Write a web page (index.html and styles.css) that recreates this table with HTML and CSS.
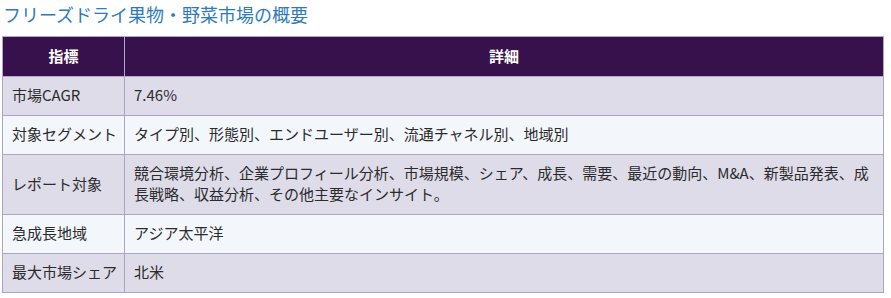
FILE: index.html
```html
<!DOCTYPE html>
<html lang="ja">
<head>
<meta charset="utf-8">
<title>フリーズドライ果物・野菜市場の概要</title>
<link rel="stylesheet" href="styles.css">
</head>
<body>
<div class="wrap">
  <h2 class="title">フリーズドライ果物・野菜市場の概要</h2>
  <table class="summary">
    <colgroup><col class="c-key"><col></colgroup>
    <thead>
      <tr><th>指標</th><th>詳細</th></tr>
    </thead>
    <tbody>
      <tr class="odd"><td>市場CAGR</td><td>7.46%</td></tr>
      <tr class="even"><td>対象セグメント</td><td>タイプ別、形態別、エンドユーザー別、流通チャネル別、地域別</td></tr>
      <tr class="odd"><td>レポート対象</td><td>競合環境分析、企業プロフィール分析、市場規模、シェア、成長、需要、最近の動向、M&amp;A、新製品発表、成長戦略、収益分析、その他主要なインサイト。</td></tr>
      <tr class="even"><td>急成長地域</td><td>アジア太平洋</td></tr>
      <tr class="odd"><td>最大市場シェア</td><td>北米</td></tr>
    </tbody>
  </table>
</div>
</body>
</html>
```
FILE: styles.css
```css
html, body {
  margin: 0;
  padding: 0;
  background: #ffffff;
}
.wrap {
  padding: 1px 7px 0 2px;
  font-family: "Noto Sans CJK JP", "Noto Sans", sans-serif;
}
.title {
  margin: 0 0 9px 1px;
  font-size: 18px;
  font-weight: normal;
  line-height: 26px;
  color: #2e7bb8;
}
.summary {
  width: 100%;
  table-layout: fixed;
  border-collapse: collapse;
  font-size: 15px;
  line-height: 21px;
  color: #2b2b2b;
}
.summary .c-key {
  width: 122px;
}
.summary th,
.summary td {
  border: 1px solid #aaa5c0;
  padding: 7px 9px 10px;
  text-align: left;
  vertical-align: middle;
}
.summary th {
  background: #36114c;
  color: #ffffff;
  font-weight: bold;
  text-align: center;
  padding: 8px 9px 10px;
  border-color: #b6a5cc;
}
.summary td:first-child {
  white-space: nowrap;
}
.odd td {
  background: #dfdcea;
}
.even td {
  background: #f3f7fb;
}
```
